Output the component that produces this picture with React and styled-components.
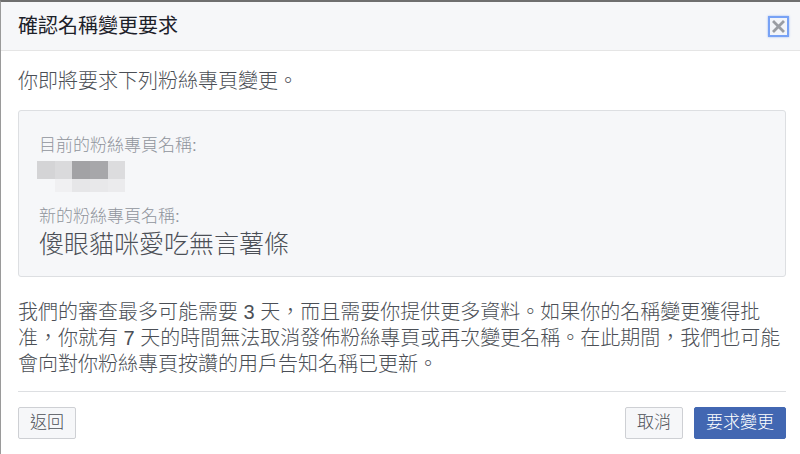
import React from 'react';
import styled, { createGlobalStyle } from 'styled-components';

const GlobalStyle = createGlobalStyle`
  html, body {
    margin: 0;
    padding: 0;
    background: #ffffff;
  }
  body {
    font-family: "Liberation Sans", "Noto Sans CJK TC", sans-serif;
    font-weight: 300;
  }
`;

const Dialog = styled.div`
  width: 800px;
  height: 454px;
  box-sizing: border-box;
  border-top: 2px solid #6f6f6f;
  border-left: 1px solid #9a9a9a;
  background: #ffffff;
  display: flex;
  flex-direction: column;
`;

const Header = styled.header`
  height: 50px;
  box-sizing: border-box;
  display: flex;
  align-items: center;
  justify-content: space-between;
  padding: 0 11px 0 17px;
  background-color: #f6f7f9;
  border-bottom: 1px solid #e5e5e5;
`;

const Title = styled.h2`
  margin: 0;
  font-size: 20px;
  font-weight: normal;
  color: #1d2129;
  line-height: 26px;
`;

const CloseButton = styled.button`
  width: 21px;
  height: 21px;
  padding: 0;
  box-sizing: border-box;
  border: 2px solid #78a2f5;
  box-shadow: 0 0 2px rgba(90, 140, 240, 0.6);
  background: #f3f5f9;
  display: flex;
  align-items: center;
  justify-content: center;
  margin-top: 1px;
`;

const Body = styled.div`
  flex: 1;
  display: flex;
  flex-direction: column;
  padding: 17px 14px 0 17px;
`;

const Intro = styled.p`
  margin: 0;
  font-size: 20px;
  line-height: 26px;
  color: #4b4f56;
`;

const NameBox = styled.div`
  margin-top: 16px;
  height: 167px;
  box-sizing: border-box;
  padding: 24px 20px 0;
  background-color: #f6f7f9;
  border: 1px solid #dddfe2;
  border-radius: 3px;
  display: flex;
  flex-direction: column;
`;

const Label = styled.div`
  font-size: 17px;
  line-height: 22px;
  color: #90949c;
  margin-top: ${(p) => p.$top || 0}px;
`;

const Mosaic = styled.svg`
  display: block;
  margin: 4px 0 0 -2px;
`;

const NewName = styled.div`
  font-size: 25px;
  line-height: 30px;
  color: #4b4f56;
  margin-top: 1px;
`;

const Notice = styled.p`
  margin: 22px 0 0;
  font-size: 20px;
  line-height: 26px;
  color: #4b4f56;
`;

const Divider = styled.hr`
  margin: 14px 0 0;
  border: none;
  border-top: 1px solid #dddfe2;
  height: 0;
`;

const Footer = styled.footer`
  display: flex;
  align-items: center;
  padding: 15px 0 15px;
`;

const Spacer = styled.div`
  flex: 1;
`;

const Button = styled.button`
  height: 32px;
  box-sizing: border-box;
  padding: 0 11px;
  margin-left: ${(p) => p.$gap || 0}px;
  font-family: "Liberation Sans", "Noto Sans CJK TC", sans-serif;
  font-size: 17px;
  font-weight: 300;
  line-height: 30px;
  border-radius: 2px;
  border: 1px solid ${(p) => (p.$primary ? '#4267b2' : '#ced0d4')};
  background-color: ${(p) => (p.$primary ? '#4267b2' : '#f6f7f9')};
  color: ${(p) => (p.$primary ? '#ffffff' : '#4b4f56')};
  cursor: pointer;
`;

const mosaic = [
  { x: 0, y: 0, w: 18, h: 18, c: '#d4d4d6' },
  { x: 18, y: 0, w: 17, h: 18, c: '#dadadc' },
  { x: 35, y: 0, w: 18, h: 18, c: '#a2a2a5' },
  { x: 53, y: 0, w: 18, h: 18, c: '#a7a7aa' },
  { x: 71, y: 0, w: 17, h: 18, c: '#dcdcde' },
  { x: 18, y: 18, w: 17, h: 13, c: '#f0f0f2' },
  { x: 35, y: 18, w: 18, h: 13, c: '#e6e6e8' },
  { x: 53, y: 18, w: 18, h: 13, c: '#e8e8ea' },
  { x: 71, y: 18, w: 17, h: 13, c: '#ebebed' },
];

export default function App() {
  return (
    <>
      <GlobalStyle />
      <Dialog>
        <Header>
          <Title>確認名稱變更要求</Title>
          <CloseButton aria-label="關閉">
            <svg width="13" height="13" viewBox="0 0 13 13">
              <path d="M2 2 L11 11 M11 2 L2 11" stroke="#9a9da3" strokeWidth="2.8" strokeLinecap="square" />
            </svg>
          </CloseButton>
        </Header>
        <Body>
          <Intro>你即將要求下列粉絲專頁變更。</Intro>
          <NameBox>
            <Label>目前的粉絲專頁名稱:</Label>
            <Mosaic width="88" height="31" viewBox="0 0 88 31">
              {mosaic.map((b, i) => (
                <rect key={i} x={b.x} y={b.y} width={b.w} height={b.h} fill={b.c} />
              ))}
            </Mosaic>
            <Label $top={14}>新的粉絲專頁名稱:</Label>
            <NewName>傻眼貓咪愛吃無言薯條</NewName>
          </NameBox>
          <Notice>
            我們的審查最多可能需要 3 天，而且需要你提供更多資料。如果你的名稱變更獲得批准，你就有 7 天的時間無法取消發佈粉絲專頁或再次變更名稱。在此期間，我們也可能會向對你粉絲專頁按讚的用戶告知名稱已更新。
          </Notice>
          <Divider />
          <Footer>
            <Button>返回</Button>
            <Spacer />
            <Button>取消</Button>
            <Button $primary $gap={11}>要求變更</Button>
          </Footer>
        </Body>
      </Dialog>
    </>
  );
}
